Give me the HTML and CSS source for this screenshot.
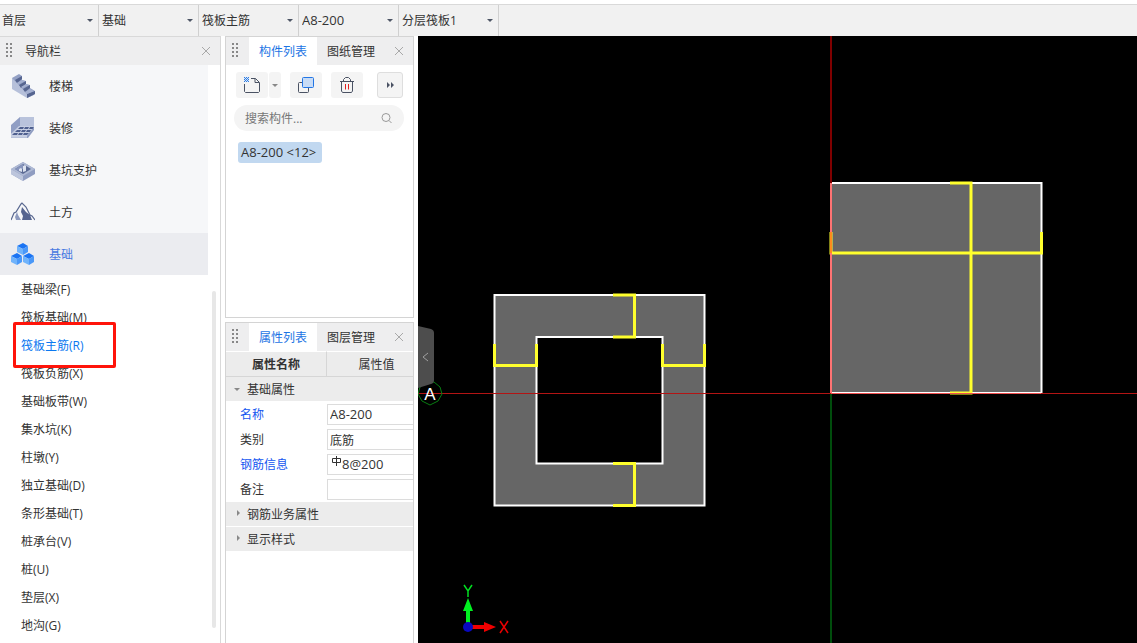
FILE: index.html
```
<!DOCTYPE html>
<html lang="zh-CN">
<head>
<meta charset="utf-8">
<title>筏板主筋</title>
<link rel="stylesheet" href="styles.css">
</head>
<body>
<div class="app">
  <div class="topbar">
    <div class="picker"><select aria-label="楼层"><option>首层</option></select></div>
    <div class="picker"><select aria-label="构件大类"><option>基础</option></select></div>
    <div class="picker"><select aria-label="构件类型"><option>筏板主筋</option></select></div>
    <div class="picker latin"><select aria-label="构件"><option>A8-200</option></select></div>
    <div class="picker"><select aria-label="分层"><option>分层筏板1</option></select></div>
  </div>
  <div class="work">
    <nav class="nav">
      <div class="panel-head">
        <span class="grip"></span>
        <span class="nav-title">导航栏</span>
        <button class="close" aria-label="关闭导航栏"><svg width="10" height="10" viewBox="0 0 10 10"><path d="M1 1l8 8M9 1l-8 8"/></svg></button>
      </div>
      <div class="nav-body">
        <div class="nav-groups">
          <button class="group">
            <svg width="24" height="24" viewBox="0 0 24 24"><path fill="#b6c0da" d="M1 4l5 1 17 14v2l-7 3L1 15z"/><path fill="#94a1c5" d="M1 4l7-4 3 2v4l4 1v3l4 1v3l5 3v3l-8 4v-4L6 9z"/><path fill="#566590" d="M4 6l7-4v3l-5 4zM8 11l7-4v3l-5 4zM12 15l7-4v3l-5 4zM16 20l8-3v3l-8 4z"/><path fill="#a4b0d0" d="M6 9l5-3 3 1-6 3zM10 13l5-3 3 1-6 3zM14 18l5-3 4 2-7 3z"/></svg>
            <span>楼梯</span>
          </button>
          <button class="group">
            <svg width="24" height="24" viewBox="0 0 24 24"><path fill="#b9c3dc" d="M9 1h14v10L16 22H0V18z"/><path fill="#909ec4" d="M9 1v9L0 18V9z"/><path fill="#c6cee2" d="M8 10h15l-7 11H0v-3z"/><path fill="#506190" d="M9 11h4l-1 2H7zM14 11h4l-1 2h-4zM19 11h4l-1 2h-4zM6 14h4l-1 2H4zM11 14h4l-1 2h-4zM16 14h4l-1 2h-4zM3 17h4l-1 2H1zM8 17h4l-1 2H7zM13 17h5l-2 2h-4z"/><path fill="#8f9dc2" d="M23 11v3l-6 8h-1v-2z"/></svg>
            <span>装修</span>
          </button>
          <button class="group">
            <svg width="24" height="24" viewBox="0 0 24 24"><path fill="#909dc1" d="M0 11L12 4l12 7v5l-12 7L0 16z"/><path fill="#bcc5dc" d="M0 11l12 7v5L0 16z"/><path fill="#aeb9d4" d="M0 11l12-7 12 7-12 7z"/><path fill="#5b6a94" d="M4 11l8-5 8 5-8 5z"/><path fill="#8795bd" d="M4 11l8-5v5l-5 2z"/><path fill="#dce2ef" d="M8 11l2-1 1 1v3l-3-1zM12 8l2-1 1 1v5l-3 1z"/></svg>
            <span>基坑支护</span>
          </button>
          <button class="group">
            <svg width="24" height="24" viewBox="0 0 24 24"><path fill="none" stroke="#596890" stroke-width="1.200" d="M0 20l3-7 2-1 5-8 1-1 4 4 4 8 2 1 3 4"/><path fill="#566590" d="M11 7l4 5 4 3 2 5H11l1-4-2-4z"/><path fill="#8d9abe" d="M6 12l1 3 3 5H5l-1-3z"/></svg>
            <span>土方</span>
          </button>
          <button class="group active">
            <svg width="24" height="24" viewBox="0 0 24 24"><g id="cube"><path fill="#1b74f3" d="M6 4l6-3 5 3-5 3z"/><path fill="#70b3fb" d="M6 4l6 3v6l-6-3z"/><path fill="#4a98f8" d="M12 7l5-3v6l-5 3z"/></g><use href="#cube" x="-6" y="10"/><use href="#cube" x="6" y="10"/></svg>
            <span>基础</span>
          </button>
        </div>
        <div class="sub">
          <div class="sub-list">
            <button>基础梁(F)</button>
            <button>筏板基础(M)</button>
            <button class="current">筏板主筋(R)</button>
            <button>筏板负筋(X)</button>
            <button>基础板带(W)</button>
            <button>集水坑(K)</button>
            <button>柱墩(Y)</button>
            <button>独立基础(D)</button>
            <button>条形基础(T)</button>
            <button>桩承台(V)</button>
            <button>桩(U)</button>
            <button>垫层(X)</button>
            <button>地沟(G)</button>
          </div>
          <div class="scrollbar"></div>
        </div>
      </div>
    </nav>

    <div class="side">
      <section class="panel components">
        <div class="panel-head">
          <span class="grip"></span>
          <button class="tab selected">构件列表</button>
          <button class="tab">图纸管理</button>
          <button class="close" aria-label="关闭构件列表"><svg width="10" height="10" viewBox="0 0 10 10"><path d="M1 1l8 8M9 1l-8 8"/></svg></button>
        </div>
        <div class="tools">
          <div class="split">
            <button class="tool" aria-label="新建"><svg width="16" height="16" viewBox="0 0 16 16"><path class="ink" d="M7 1.500h4.500l4 4v9l-1 1h-13l-1-1V7M11 1.500V5.500H15"/><path fill="#2f7de1" d="M0 0h5v5H0z"/><path fill="#d5e5fb" d="M1 0h1v1H1zM3 0h1v1H3zM0 1h1v1H0zM2 1h1v1H2zM4 1h1v1H4zM1 2h1v1H1zM3 2h1v1H3zM0 3h1v1H0zM2 3h1v1H2zM4 3h1v1H4zM1 4h1v1H1zM3 4h1v1H3z"/></svg></button>
            <button class="tool-arrow" aria-label="新建选项"><span class="caret"></span></button>
          </div>
          <button class="tool" aria-label="复制"><svg width="16" height="16" viewBox="0 0 16 16"><rect class="ink" x=".5" y="5.500" width="10" height="10" rx="1"/><rect x="4.500" y=".5" width="11" height="10" rx="1" fill="#c8dcf6" stroke="#2376e5"/></svg></button>
          <button class="tool" aria-label="删除"><svg width="16" height="16" viewBox="0 0 16 16"><path class="ink" d="M1 4.500h14M4.500 4V2.500l2-2h3l2 2V4M2.500 5v9l1 1.500h9l1-1.500V5"/><path stroke="#e02020" fill="none" d="M6.500 7v5.500M9.500 7v5.500"/></svg></button>
          <button class="tool more" aria-label="更多"><svg width="8" height="6" viewBox="0 0 8 6"><path fill="#4a5263" d="M1 0l3 3-3 3zM5 0l3 3-3 3z"/></svg></button>
        </div>
        <label class="search">
          <input type="text" placeholder="搜索构件..." aria-label="搜索构件">
          <svg width="12" height="12" viewBox="0 0 12 12"><circle cx="5" cy="5.500" r="4"/><path d="M8 8.500l2.500 2.500"/></svg>
        </label>
        <button class="entry">A8-200 &lt;12&gt;</button>
      </section>

      <section class="panel props">
        <div class="panel-head">
          <span class="grip"></span>
          <button class="tab selected">属性列表</button>
          <button class="tab">图层管理</button>
          <button class="close" aria-label="关闭属性列表"><svg width="10" height="10" viewBox="0 0 10 10"><path d="M1 1l8 8M9 1l-8 8"/></svg></button>
        </div>
        <table>
          <thead><tr><th class="name-col">属性名称</th><th class="value-col">属性值</th></tr></thead>
          <tbody>
            <tr class="section"><td colspan="2"><span class="caret"></span>基础属性</td></tr>
            <tr><td class="key"><label for="p-name">名称</label></td><td><div class="field"><input id="p-name" value="A8-200"></div></td></tr>
            <tr><td><label for="p-kind">类别</label></td><td><div class="field"><input class="cjk" id="p-kind" value="底筋"></div></td></tr>
            <tr><td class="key"><label for="p-bar">钢筋信息</label></td><td><div class="field"><svg class="rebar" width="10" height="12" viewBox="0 0 10 12"><path d="M.5 3.500h8v4h-8zM4.500 1v10"/></svg><input id="p-bar" value="8@200"></div></td></tr>
            <tr><td><label for="p-note">备注</label></td><td><div class="field"><input id="p-note" value=""></div></td></tr>
            <tr class="section"><td colspan="2"><span class="caret right"></span>钢筋业务属性</td></tr>
            <tr class="section"><td colspan="2"><span class="caret right"></span>显示样式</td></tr>
          </tbody>
        </table>
      </section>
    </div>

    <main class="view">
      <svg class="drawing" width="100%" height="100%">
        <g class="slab">
          <path d="M76.500 259h210v210.500h-210zM118.500 301v126.500h126V301z" fill-rule="evenodd"/>
          <path d="M413 147h210.500v210H413z"/>
        </g>
        <g class="bars">
          <path d="M195 259h21.500v42H195M195 427.500h21.500v42H195"/>
          <path d="M76.500 308v21.500h42V308M244.500 308v21.500h42V308"/>
          <path d="M532 147h21v210h-21M413 196v21h210.500v-21"/>
        </g>
        <path class="axis-up" d="M413 0V147"/>
        <path class="axis-edge" d="M413 147V357"/>
        <path class="axis-down" d="M413 358V4000"/>
        <path stroke="#ff8a1c" stroke-width="2" d="M413 196v21"/>
        <rect class="axis-red" x="0" y="357" width="100%" height="1"/>
        <rect class="axis-low" x="413" y="357" width="210" height="1"/>
        <path class="bubble" d="M7 347l9-1 6 5 2 7-4 7-8 4-8-4-4-7 2-7z"/>
        <text class="grid-mark" x="12" y="364">A</text>
        <g class="ucs">
          <path fill="#00f020" d="M48 588v-13h-3l5-13 5 13h-3v13z"/>
          <path fill="#f00000" d="M54 589h12v-3l12 5-12 5v-3H54z"/>
          <circle cx="50" cy="591" r="5" fill="#0808c0"/>
          <path stroke="#00e020" stroke-width="1.500" d="M46 549l4 6 4-6M50 555v6"/>
          <path stroke="#e80000" stroke-width="1.500" d="M82 585l8 12M90 585l-8 12"/>
        </g>
      </svg>
      <button class="fold" aria-label="收起面板"><svg width="16" height="62" viewBox="0 0 16 62"><path fill="#4d4d4d" d="M0 0l13 3q3 1 3 4v47q0 3-3 4L0 62z"/><path fill="none" stroke="#a0a0a0" d="M10 27l-5 4 5 4"/></svg></button>
    </main>
  </div>
  <div class="marker"></div>
</div>
</body>
</html>
```
FILE: styles.css
```
* { box-sizing: border-box; }
body {
  margin: 0;
  font: 12px/16px "Open Sans", "Noto Sans CJK SC", sans-serif;
  color: #333;
  background: #fff;
}
button, input, select {
  font: inherit;
  color: inherit;
  margin: 0;
  padding: 0;
  border: 0;
  background: none;
  outline: none;
}
svg { display: block; flex: none; }
.app {
  position: relative;
  height: 100vh;
  padding-top: 4px;
  display: flex;
  flex-direction: column;
  overflow: hidden;
}
.topbar {
  display: flex;
  flex: none;
  height: 32px;
  padding-right: 8px;
  background: #f1f1f1;
  border-top: 1px solid #d9d9d9;
}
.picker {
  position: relative;
  width: 100px;
  border-right: 1px solid #d0d0d0;
}
.picker:first-child { width: 99px; }
.picker select {
  appearance: none;
  width: 100%;
  height: 100%;
  padding-left: 3px;
}
.picker:first-child select { padding-left: 2px; }
.picker.latin, .entry { font-size: 13px; }
.picker.latin select { padding-bottom: 2px; }
.picker::after {
  content: "";
  position: absolute;
  right: 5px;
  top: 14px;
  border: 3px solid transparent;
  border-top-color: #4d5565;
  border-bottom: 0;
  pointer-events: none;
}
.work { display: flex; flex: 1; min-height: 0; }
.nav {
  display: flex;
  flex-direction: column;
  flex: none;
  width: 221px;
  border: solid #d9d9d9;
  border-width: 1px 1px 0 0;
}
.panel-head {
  display: flex;
  align-items: center;
  flex: none;
  height: 28px;
  background: #eeeeef;
}
.grip {
  width: 8px;
  height: 16px;
  margin-left: 4px;
  background: conic-gradient(#888 25%, transparent 0) 0 0 / 4px 4px;
}
.nav-title { margin-left: 13px; padding-top: 2px; }
.close { margin-left: auto; padding: 4px; }
.nav .close { margin-right: 5px; }
.close svg { fill: none; stroke: #a8a8a8; }
.nav-groups { width: 208px; background: #f6f7f9; }
.group {
  display: flex;
  align-items: center;
  gap: 14px;
  width: 100%;
  height: 42px;
  padding-left: 11px;
}
.group span { padding-top: 2px; }
.group.active { background: #ebecf0; color: #4678e0; }
.sub { display: flex; justify-content: space-between; }
.sub-list { display: flex; flex-direction: column; }
.sub-list button {
  height: 28px;
  padding: 2px 0 0 21px;
  text-align: left;
}
.sub-list .current { color: #0b78f0; }
.scrollbar {
  width: 4px;
  height: 337px;
  margin: 16px 4px 0 0;
  border-radius: 2px;
  background: #e7e7e7;
}
.marker {
  position: absolute;
  left: 13px;
  top: 322px;
  width: 103px;
  height: 46px;
  border: 3px solid #ff140a;
  border-radius: 2px;
  pointer-events: none;
}
.side {
  display: flex;
  flex-direction: column;
  gap: 4px;
  flex: none;
  width: 189px;
  margin: 0 4px;
}
.panel { border: 1px solid #d4d4d4; overflow: hidden; }
.components { flex: none; height: 282px; }
.props { flex: 1; border-bottom: 0; }
.side .grip { margin: 0 11px 0 4px; }
.side .close { margin-right: 5px; }
.tab { height: 28px; padding: 2px 10px 0; }
.tab.selected { background: #fff; color: #1c74e4; }
.tools { display: flex; gap: 9px; padding: 7px 10px 0 10px; }
.split { display: flex; gap: 1px; }
.tool, .tool-arrow {
  display: flex;
  align-items: center;
  justify-content: center;
  width: 32px;
  height: 26px;
  border-radius: 3px;
  background: #f4f4f4;
}
.tool-arrow { width: 12px; }
.tool.more { width: 26px; margin-left: auto; border: 1px solid #dedede; }
.tool .ink { fill: none; stroke: #4a5263; }
.caret {
  display: inline-block;
  border: 3px solid transparent;
  border-top-color: #888;
  border-bottom: 0;
}
.caret.right {
  border: 3px solid transparent;
  border-left-color: #888;
  border-right: 0;
}
.search {
  display: flex;
  align-items: center;
  height: 26px;
  margin: 7px 9px 0 8px;
  padding: 0 11px;
  border-radius: 13px;
  background: #f4f4f4;
}
.search input { flex: 1; min-width: 0; padding-top: 2px; }
.search input::placeholder { color: #777; opacity: 1; }
.search svg { fill: none; stroke: #999; }
.entry {
  display: block;
  min-width: 84px;
  height: 21px;
  margin: 11px 0 0 12px;
  padding: 0 3px 2px;
  border-radius: 3px;
  text-align: left;
  background: #c1d8f0;
}
.props table {
  width: 201px;
  table-layout: fixed;
  border-spacing: 0;
}
.props tr { height: 25px; }
.props th {
  height: 26px;
  padding: 2px 0 0;
  background: #ececec;
  border: solid #d6d6d6;
  border-width: 0 1px 1px 0;
  border-top: 1px solid #fff;
}
.name-col { width: 101px; }
.props .value-col { font-weight: 400; }
.props td { height: 25px; padding: 0 0 0 14px; }
.props td + td { padding: 0; }
.props .section td {
  padding: 2px 0 0 8px;
  background: #ececec;
  border-bottom: 1px solid #fff;
}
.section .caret { margin-right: 7px; vertical-align: 3px; }
.section .caret.right { margin: 0 7px 0 3px; }
.key { color: #1456f0; }
.field {
  display: flex;
  align-items: center;
  height: 21px;
  padding-left: 2px;
  border: 1px solid #dcdcdc;
}
.field input { flex: 1; min-width: 0; height: 19px; padding-bottom: 2px; font-size: 13px; }
.field .cjk { padding: 0; font-size: 12px; }
.rebar { align-self: flex-start; margin-left: 2px; fill: none; stroke: #333; }
.view {
  position: relative;
  flex: 1;
  min-width: 0;
  overflow: hidden;
  background: #000;
}
.drawing { position: absolute; inset: 0; }
.slab { fill: #666; stroke: #fff; stroke-width: 2; }
.bars { fill: none; stroke: #ffff2d; stroke-width: 3; }
.axis-red { fill: #b31414; }
.axis-low { fill: #f05050; }
.axis-up { stroke: #800000; stroke-width: 2; }
.axis-edge { stroke: #ff7373; stroke-width: 2; }
.axis-down { stroke: #004d0c; stroke-width: 2; }
.bubble { fill: none; stroke: #087d12; }
.grid-mark {
  fill: #fff;
  font: 17px "Liberation Sans", sans-serif;
  text-anchor: middle;
}
.ucs { fill: none; }
.fold { position: absolute; left: 0; top: 290px; }
```
